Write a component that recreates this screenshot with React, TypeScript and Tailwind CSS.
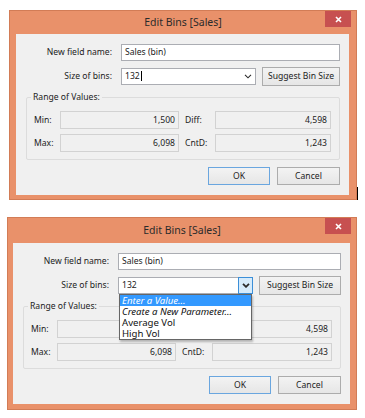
import React from 'react'

const ff = "font-['Noto_Sans','Open_Sans',sans-serif]"

function Chevron({ bold }: { bold?: boolean }) {
  return (
    <svg width="8" height="5" viewBox="0 0 8 5">
      <path d="M1 0.8 L4 3.8 L7 0.8" fill="none" stroke="#2a2a2a" strokeWidth={bold ? 1.8 : 1.1} />
    </svg>
  )
}

function ReadBox({ value }: { value: string }) {
  return (
    <div className="h-[18px] border border-[#d2d2d2] bg-[#f0f0f0] flex items-center justify-end pr-[3px] text-[#222]">
      {value}
    </div>
  )
}

function Btn({ label, primary }: { label: string; primary?: boolean }) {
  return (
    <div
      className={
        primary
          ? 'h-[18px] w-[62px] border border-[#6aa6df] bg-gradient-to-b from-[#f3f3f3] to-[#e6e6e6] flex items-center justify-center text-[#222]'
          : 'h-[18px] w-[63px] border border-[#acacac] bg-gradient-to-b from-[#f3f3f3] to-[#e6e6e6] flex items-center justify-center text-[#222]'
      }
    >
      {label}
    </div>
  )
}

function Dropdown() {
  return (
    <div className="absolute left-0 top-[16px] w-full border border-[#666] bg-white shadow-[1px_2px_2px_rgba(0,0,0,0.25)] z-10 text-[#111] text-[9.6px] leading-[11px]">
      <div className="bg-[#3399ff] text-white italic h-[11px] pl-[2px]">Enter a Value...</div>
      <div className="italic h-[11px] pl-[2px]">Create a New Parameter...</div>
      <div className="h-[11px] pl-[2px]">Average Vol</div>
      <div className="h-[11px] pl-[2px]">High Vol</div>
    </div>
  )
}

function Dialog({ open, className }: { open?: boolean; className: string }) {
  return (
    <div className={`relative flex flex-col border border-[#d27c56] bg-[#e9916a] ${className}`}>
      <div className="grid grid-cols-[1fr_auto_1fr] h-[25px]">
        <div />
        <div className="self-center text-[10.5px] text-[#2b2b2b] pt-[1px]">Edit Bins [Sales]</div>
        <div className="flex justify-end items-start">
          <div className="mr-[5px] w-[26px] h-[16px] bg-[#c75050] flex items-center justify-center">
            <svg width="7" height="7" viewBox="0 0 7 7">
              <path d="M1 1 L6 6 M6 1 L1 6" stroke="white" strokeWidth="1.6" />
            </svg>
          </div>
        </div>
      </div>
      <div className={open ? 'flex-1 ml-[5px] mr-[6px] mb-[5px] bg-[#f0f0f0]' : 'flex-1 ml-[6px] mr-[7px] mb-[4px] bg-[#f0f0f0]'}>
        <div className="pt-[10px] pl-[10px] pr-[9px] pb-[10px] flex flex-col text-[8.6px] text-[#222]">
          <div className="flex items-center">
            <div className="w-[86px] text-right">New field name:</div>
            <div className="ml-[9px] flex-1 h-[17px] border border-[#abadb3] bg-white flex items-center pl-[3px]">
              Sales (bin)
            </div>
          </div>
          <div className="flex items-center mt-[6px]">
            <div className="w-[86px] text-right">Size of bins:</div>
            <div className="relative ml-[9px] w-[135px] h-[17px] border border-[#abadb3] bg-white flex items-center">
              <div className="flex-1 pl-[3px] flex items-center">
                132{!open && <span className="inline-block w-px h-[10px] bg-black ml-px" />}
              </div>
              {open ? (
                <div className="w-[15px] h-[17px] -my-px -mr-px border border-[#3c8fd8] bg-[#d6ebfb] flex items-center justify-center">
                  <Chevron bold />
                </div>
              ) : (
                <div className="w-[15px] flex items-center justify-center">
                  <Chevron />
                </div>
              )}
              {open && <Dropdown />}
            </div>
            <div className="ml-[6px] flex-1 h-[19px] border border-[#acacac] bg-gradient-to-b from-[#f3f3f3] to-[#e6e6e6] flex items-center justify-center">
              Suggest Bin Size
            </div>
          </div>
          <fieldset className="mt-[5px] border border-[#dcdcdc] rounded-[2px]">
            <legend className="ml-[4px] px-[2px] leading-[12px]">Range of Values:</legend>
            <div className="grid grid-cols-[26px_119px_36px_1fr] gap-y-[5px] items-center pl-[7px] pr-[8px] pt-[8px] pb-[7px]">
              <div>Min:</div>
              <ReadBox value="1,500" />
              <div className="pl-[6px]">Diff:</div>
              <ReadBox value="4,598" />
              <div>Max:</div>
              <ReadBox value="6,098" />
              <div className="pl-[6px]">CntD:</div>
              <ReadBox value="1,243" />
            </div>
          </fieldset>
          <div className="flex justify-end gap-[7px] mt-[7px]">
            <Btn label="OK" primary />
            <Btn label="Cancel" />
          </div>
        </div>
      </div>
      {!open && <div className="absolute right-[-2px] bottom-[-1px] w-px h-[13px] bg-black" />}
    </div>
  )
}

export default function App() {
  return (
    <div className={`w-[365px] h-[418px] bg-white overflow-hidden ${ff}`}>
      <Dialog className="ml-[9px] mt-[10px] w-[348px] h-[190px]" />
      <Dialog open className="ml-[7px] mt-[17px] w-[350px] h-[193px]" />
    </div>
  )
}
